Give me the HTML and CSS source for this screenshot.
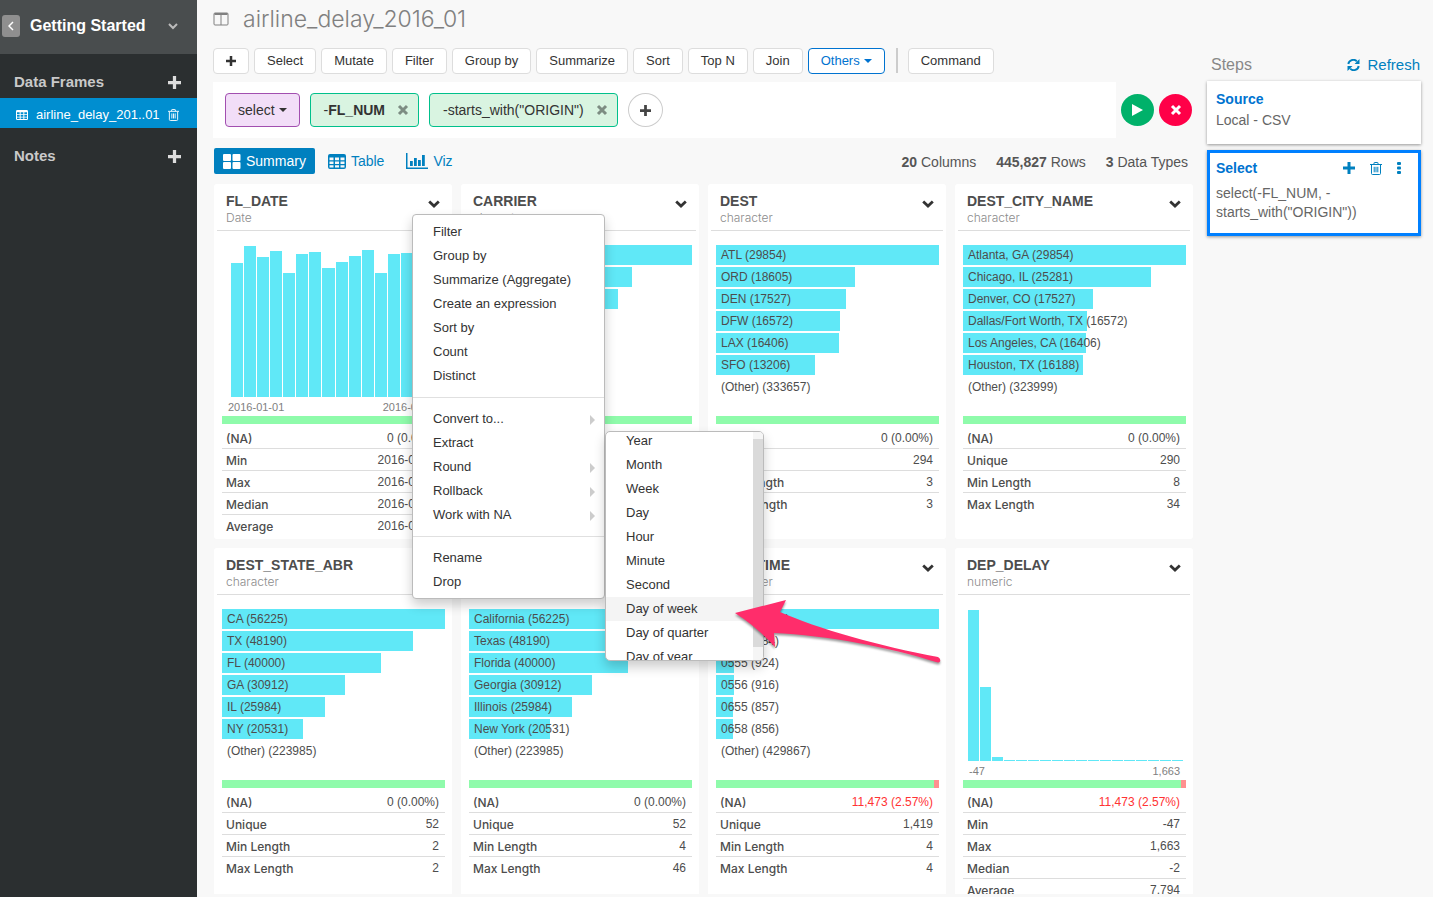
FILE: index.html
```html
<!DOCTYPE html>
<html lang="en">
<head>
<meta charset="utf-8">
<title>airline_delay_2016_01</title>
<link rel="stylesheet" href="styles.css">
</head>
<body>
<svg class="defs" aria-hidden="true">
  <symbol id="plus" viewBox="0 0 12 12"><path d="M4.5 0h3v4.5H12v3H7.500V12h-3V7.500H0v-3h4.500z"/></symbol>
  <symbol id="times" viewBox="0 0 12 12"><path d="M2 2l8 8M10 2l-8 8" fill="none" stroke="currentColor" stroke-width="3"/></symbol>
  <symbol id="trash" viewBox="0 0 12 13"><path d="M0 2.500h12M4 2.500V1q0-.5.5-.5h3q.5 0 .5.5v1.500M1.500 3v8.500q0 1 1 1h7q1 0 1-1V3M4.200 4.800v5.500M6 4.800v5.500M7.800 4.800v5.500" fill="none" stroke="currentColor"/></symbol>
  <symbol id="table" viewBox="0 0 18 15"><path fill-rule="evenodd" d="M2 0h14q2 0 2 2v11q0 2-2 2H2q-2 0-2-2V2q0-2 2-2zM1.500 3.500v2.700h4V3.500zM7 3.500v2.700h4V3.500zM12.500 3.500v2.700h4V3.500zM1.500 7.500v2.500h4V7.500zM7 7.500v2.500h4V7.500zM12.500 7.500v2.500h4V7.500zM1.500 11.300v2.200h4v-2.200zM7 11.300v2.200h4v-2.200zM12.500 11.300v2.200h4v-2.200z"/></symbol>
  <symbol id="chevron" viewBox="0 0 12 8"><path d="M1.200 1.500L6 6l4.800-4.500" fill="none" stroke="currentColor" stroke-width="2.800"/></symbol>
</svg>
<div class="app">
  <nav class="sidebar">
    <div class="project">
      <button class="back" aria-label="Back"><svg width="6" height="10" viewBox="0 0 6 10"><path d="M5 1L1 5l4 4" fill="none" stroke="currentColor" stroke-width="1.500"/></svg></button>
      <span class="project-name">Getting Started</span>
      <button class="project-toggle" aria-label="Switch project"><svg width="10" height="7" viewBox="0 0 10 7"><path d="M1 1l4 4 4-4" fill="none" stroke="currentColor" stroke-width="2"/></svg></button>
    </div>
    <div class="section"><h2>Data Frames</h2><button aria-label="Add data frame"><svg width="13" height="13"><use href="#plus"/></svg></button></div>
    <div class="frame">
      <a href="#"><svg width="12" height="10"><use href="#table"/></svg>airline_delay_201..01</a>
      <button aria-label="Delete data frame"><svg width="11" height="12"><use href="#trash"/></svg></button>
    </div>
    <div class="section"><h2>Notes</h2><button aria-label="Add note"><svg width="13" height="13"><use href="#plus"/></svg></button></div>
  </nav>

  <main class="main">
    <header class="title">
      <svg width="16" height="14" viewBox="0 0 15 14"><path d="M1.500 1h12q1 0 1 1v10q0 1-1 1h-12q-1 0-1-1V2q0-1 1-1zM7.500 1v12" fill="none" stroke="currentColor"/><path d="M1 1h13v2H1z"/></svg>
      <h1>airline_delay_2016_01</h1>
    </header>
    <div class="columns">
      <section class="work">
        <div class="toolbar">
          <button class="btn" aria-label="Add"><svg width="10" height="10"><use href="#plus"/></svg></button>
          <button class="btn">Select</button>
          <button class="btn">Mutate</button>
          <button class="btn">Filter</button>
          <button class="btn">Group by</button>
          <button class="btn">Summarize</button>
          <button class="btn">Sort</button>
          <button class="btn">Top N</button>
          <button class="btn">Join</button>
          <button class="btn btn-active">Others<span class="caret"></span></button>
          <span class="separator"></span>
          <button class="btn">Command</button>
        </div>
        <div class="command">
          <div class="tokens">
            <button class="token verb">select<span class="caret"></span></button>
            <div class="token"><span>-<b>FL_NUM</b></span><button aria-label="Remove FL_NUM"><svg width="12" height="12"><use href="#times"/></svg></button></div>
            <div class="token"><span>-starts_with("ORIGIN")</span><button aria-label="Remove ORIGIN"><svg width="12" height="12"><use href="#times"/></svg></button></div>
            <button class="add-token" aria-label="Add argument"><svg width="11" height="11"><use href="#plus"/></svg></button>
          </div>
          <button class="round run" aria-label="Run"><svg width="11" height="12" viewBox="0 0 11 12"><path d="M0 0l11 6-11 6z"/></svg></button>
          <button class="round cancel" aria-label="Cancel"><svg width="12" height="12"><use href="#times"/></svg></button>
        </div>
        <div class="views">
          <a class="view current" href="#"><svg width="18" height="15" viewBox="0 0 18 15"><rect width="8" height="7" rx="1"/><rect x="9.500" width="8" height="7" rx="1"/><rect y="8" width="8" height="7" rx="1"/><rect x="9.500" y="8" width="8" height="7" rx="1"/></svg>Summary</a>
          <a class="view" href="#"><svg width="18" height="15"><use href="#table"/></svg>Table</a>
          <a class="view" href="#"><svg width="22" height="16" viewBox="0 0 22 16"><path d="M0 0h1.500v14.500H22V16H0zM4 8h2.800v5H4zM8 5h2.800v8H8zM12 7h2.800v6H12zM16 2h2.800v11H16z"/></svg>Viz</a>
          <p class="counts"><span><b>20</b> Columns</span><span><b>445,827</b> Rows</span><span><b>3</b> Data Types</span></p>
        </div>

        <div class="cards">
          <article class="card">
            <header><div><h3>FL_DATE</h3><p>Date</p></div><button aria-label="FL_DATE menu"><svg width="12" height="8"><use href="#chevron"/></svg></button></header>
            <div class="chart">
              <div class="histogram dates">
                <i style="height:134px"></i><i style="height:151px"></i><i style="height:140px"></i><i style="height:146px"></i><i style="height:124px"></i><i style="height:143px"></i><i style="height:145px"></i><i style="height:129px"></i><i style="height:135px"></i><i style="height:141px"></i><i style="height:147px"></i><i style="height:124px"></i><i style="height:143px"></i><i style="height:144px"></i><i style="height:138px"></i><i style="height:130px"></i>
              </div>
              <div class="axis"><span>2016-01-01</span><span>2016-01-31</span></div>
            </div>
            <div class="quality"></div>
            <table>
              <tr><th>(NA)</th><td>0 (0.00%)</td></tr>
              <tr><th>Min</th><td>2016-01-01</td></tr>
              <tr><th>Max</th><td>2016-01-31</td></tr>
              <tr><th>Median</th><td>2016-01-15</td></tr>
              <tr><th>Average</th><td>2016-01-15</td></tr>
            </table>
            <div class="popup">
              <ul class="menu">
                <li>Filter</li><li>Group by</li><li>Summarize (Aggregate)</li><li>Create an expression</li><li>Sort by</li><li>Count</li><li>Distinct</li>
                <li class="divider"></li>
                <li class="more">Convert to...</li><li>Extract</li><li class="more">Round</li><li class="more">Rollback</li><li class="more">Work with NA</li>
                <li class="divider"></li>
                <li>Rename</li><li>Drop</li>
              </ul>
              <div class="submenu">
                <ul>
                  <li>Year</li><li>Month</li><li>Week</li><li>Day</li><li>Hour</li><li>Minute</li><li>Second</li><li class="hover">Day of week</li><li>Day of quarter</li><li>Day of year</li>
                </ul>
                <div class="scrollbar"><span></span></div>
              </div>
              <svg class="pointer" width="212" height="70" viewBox="0 0 212 70"><path d="M3 17L54 4 48 16C84 32 150 51 206 61Q209 63 208 65.500Q207 67 204 66C160 52 94 39 42 37L43 51Q25 31 3 17z"/></svg>
            </div>
          </article>

          <article class="card">
            <header><div><h3>CARRIER</h3><p>character</p></div><button aria-label="CARRIER menu"><svg width="12" height="8"><use href="#chevron"/></svg></button></header>
            <ul class="chart">
              <li><span style="width:100%">WN (104169)</span></li>
              <li><span style="width:73%">DL (76017)</span></li>
              <li><span style="width:67%">AA (69793)</span></li>
              <li><span style="width:48%">OO (50001)</span></li>
              <li><span style="width:37%">UA (38541)</span></li>
              <li><span style="width:37%">EV (38541)</span></li>
              <li>(Other) (68765)</li>
            </ul>
            <div class="quality"></div>
            <table>
              <tr><th>(NA)</th><td>0 (0.00%)</td></tr>
              <tr><th>Unique</th><td>12</td></tr>
              <tr><th>Min Length</th><td>2</td></tr>
              <tr><th>Max Length</th><td>2</td></tr>
            </table>
          </article>

          <article class="card">
            <header><div><h3>DEST</h3><p>character</p></div><button aria-label="DEST menu"><svg width="12" height="8"><use href="#chevron"/></svg></button></header>
            <ul class="chart">
              <li><span style="width:100%">ATL (29854)</span></li>
              <li><span style="width:62.500%">ORD (18605)</span></li>
              <li><span style="width:58.500%">DEN (17527)</span></li>
              <li><span style="width:55.400%">DFW (16572)</span></li>
              <li><span style="width:55%">LAX (16406)</span></li>
              <li><span style="width:44.200%">SFO (13206)</span></li>
              <li>(Other) (333657)</li>
            </ul>
            <div class="quality"></div>
            <table>
              <tr><th>(NA)</th><td>0 (0.00%)</td></tr>
              <tr><th>Unique</th><td>294</td></tr>
              <tr><th>Min Length</th><td>3</td></tr>
              <tr><th>Max Length</th><td>3</td></tr>
            </table>
          </article>

          <article class="card">
            <header><div><h3>DEST_CITY_NAME</h3><p>character</p></div><button aria-label="DEST_CITY_NAME menu"><svg width="12" height="8"><use href="#chevron"/></svg></button></header>
            <ul class="chart">
              <li><span style="width:100%">Atlanta, GA (29854)</span></li>
              <li><span style="width:84.500%">Chicago, IL (25281)</span></li>
              <li><span style="width:58.500%">Denver, CO (17527)</span></li>
              <li><span style="width:55.400%">Dallas/Fort Worth, TX (16572)</span></li>
              <li><span style="width:55%">Los Angeles, CA (16406)</span></li>
              <li><span style="width:54%">Houston, TX (16188)</span></li>
              <li>(Other) (323999)</li>
            </ul>
            <div class="quality"></div>
            <table>
              <tr><th>(NA)</th><td>0 (0.00%)</td></tr>
              <tr><th>Unique</th><td>290</td></tr>
              <tr><th>Min Length</th><td>8</td></tr>
              <tr><th>Max Length</th><td>34</td></tr>
            </table>
          </article>

          <article class="card">
            <header><div><h3>DEST_STATE_ABR</h3><p>character</p></div><button aria-label="DEST_STATE_ABR menu"><svg width="12" height="8"><use href="#chevron"/></svg></button></header>
            <ul class="chart">
              <li><span style="width:100%">CA (56225)</span></li>
              <li><span style="width:85.700%">TX (48190)</span></li>
              <li><span style="width:71.200%">FL (40000)</span></li>
              <li><span style="width:55%">GA (30912)</span></li>
              <li><span style="width:46.300%">IL (25984)</span></li>
              <li><span style="width:36.500%">NY (20531)</span></li>
              <li>(Other) (223985)</li>
            </ul>
            <div class="quality"></div>
            <table>
              <tr><th>(NA)</th><td>0 (0.00%)</td></tr>
              <tr><th>Unique</th><td>52</td></tr>
              <tr><th>Min Length</th><td>2</td></tr>
              <tr><th>Max Length</th><td>2</td></tr>
            </table>
          </article>

          <article class="card">
            <header><div><h3>DEST_STATE_NM</h3><p>character</p></div><button aria-label="DEST_STATE_NM menu"><svg width="12" height="8"><use href="#chevron"/></svg></button></header>
            <ul class="chart">
              <li><span style="width:100%">California (56225)</span></li>
              <li><span style="width:85.700%">Texas (48190)</span></li>
              <li><span style="width:71.200%">Florida (40000)</span></li>
              <li><span style="width:55%">Georgia (30912)</span></li>
              <li><span style="width:46.300%">Illinois (25984)</span></li>
              <li><span style="width:36.500%">New York (20531)</span></li>
              <li>(Other) (223985)</li>
            </ul>
            <div class="quality"></div>
            <table>
              <tr><th>(NA)</th><td>0 (0.00%)</td></tr>
              <tr><th>Unique</th><td>52</td></tr>
              <tr><th>Min Length</th><td>4</td></tr>
              <tr><th>Max Length</th><td>46</td></tr>
            </table>
          </article>

          <article class="card">
            <header><div><h3>DEP_TIME</h3><p>character</p></div><button aria-label="DEP_TIME menu"><svg width="12" height="8"><use href="#chevron"/></svg></button></header>
            <ul class="chart">
              <li><span style="width:100%">(NA) (11473)</span></li>
              <li><span style="width:8.500%">0600 (984)</span></li>
              <li><span style="width:8.100%">0555 (924)</span></li>
              <li><span style="width:8%">0556 (916)</span></li>
              <li><span style="width:7.500%">0655 (857)</span></li>
              <li><span style="width:7.500%">0658 (856)</span></li>
              <li>(Other) (429867)</li>
            </ul>
            <div class="quality missing"></div>
            <table>
              <tr><th>(NA)</th><td class="bad">11,473 (2.57%)</td></tr>
              <tr><th>Unique</th><td>1,419</td></tr>
              <tr><th>Min Length</th><td>4</td></tr>
              <tr><th>Max Length</th><td>4</td></tr>
            </table>
          </article>

          <article class="card">
            <header><div><h3>DEP_DELAY</h3><p>numeric</p></div><button aria-label="DEP_DELAY menu"><svg width="12" height="8"><use href="#chevron"/></svg></button></header>
            <div class="chart">
              <div class="histogram">
                <i style="height:151px"></i><i style="height:74px"></i><i style="height:4px"></i><i></i><i></i><i></i><i></i><i></i><i></i><i></i><i></i><i></i><i></i><i></i><i></i><i></i><i></i><i></i>
              </div>
              <div class="axis"><span>-47</span><span>1,663</span></div>
            </div>
            <div class="quality missing"></div>
            <table>
              <tr><th>(NA)</th><td class="bad">11,473 (2.57%)</td></tr>
              <tr><th>Min</th><td>-47</td></tr>
              <tr><th>Max</th><td>1,663</td></tr>
              <tr><th>Median</th><td>-2</td></tr>
              <tr><th>Average</th><td>7.794</td></tr>
            </table>
          </article>
        </div>
      </section>

      <aside class="steps">
        <div class="steps-head"><h2>Steps</h2><a href="#"><svg width="13" height="12" viewBox="0 0 13 12"><path d="M1.300 5A5 5 0 0 1 9.800 2.300M11.700 7A5 5 0 0 1 3.200 9.700" fill="none" stroke="currentColor" stroke-width="1.900"/><path d="M12.500 0v5h-5zM.5 12V7h5z"/></svg>Refresh</a></div>
        <div class="step"><h3>Source</h3><p>Local - CSV</p></div>
        <div class="step selected">
          <div class="step-title"><h3>Select</h3>
            <button aria-label="Add step"><svg width="12" height="12"><use href="#plus"/></svg></button>
            <button aria-label="Delete step"><svg width="12" height="13"><use href="#trash"/></svg></button>
            <button aria-label="More"><svg width="4" height="12" viewBox="0 0 4 12"><rect width="4" height="3" rx="1"/><rect y="4.500" width="4" height="3" rx="1"/><rect y="9" width="4" height="3" rx="1"/></svg></button>
          </div>
          <p>select(-FL_NUM, -<br>starts_with("ORIGIN"))</p>
        </div>
      </aside>
    </div>
  </main>
</div>
</body>
</html>
```
FILE: styles.css
```css
* { box-sizing: border-box; }
body { margin: 0; background: #f8f8f8; color: #4d4d4d; font: 14px/20px "Liberation Sans", Arial, sans-serif; }
h1, h2, h3, p, ul { margin: 0; padding: 0; }
ul { list-style: none; }
a { text-decoration: none; color: #0080bf; }
button { margin: 0; padding: 0; border: 0; background: none; color: inherit; font: inherit; }
svg { display: block; flex: none; fill: currentColor; }
.defs { position: absolute; width: 0; height: 0; }

.app { display: flex; height: 100vh; overflow: hidden; }

/* Sidebar */
.sidebar { flex: none; width: 197px; background: #2b2f30; color: #c9c9c9; }
.project { display: flex; align-items: center; height: 54px; padding: 0 19px 2px 2px; background: #494d4e; color: #fff; }
.back { display: grid; place-items: center; width: 18px; height: 22px; border-radius: 3px; background: #8f8f8f; }
.project-name { flex: 1; margin-left: 10px; font-size: 16px; font-weight: bold; }
.project-toggle { color: #bbb; }
.section { display: flex; align-items: center; justify-content: space-between; height: 32px; margin-top: 12px; padding: 0 16px 0 14px; }
.section h2 { font-size: 15px; }
.section button { color: #ddd; }
.frame { display: flex; align-items: center; justify-content: space-between; height: 30px; padding: 3px 18px 0 16px; background: #008ed0; color: #fff; font-size: 13px; }
.frame a { display: flex; align-items: center; gap: 8px; color: #fff; }

/* Page title */
.main { display: flex; flex-direction: column; flex: 1; min-width: 0; padding: 0 12px 3px 16px; }
.title { display: flex; align-items: center; gap: 14px; height: 48px; padding-bottom: 11px; color: #808080; }
.title h1 { font: 300 23px/28px Inter, "Liberation Sans", sans-serif; }
.columns { display: grid; grid-template-columns: minmax(0, 1fr) 214px; gap: 14px; flex: 1; min-height: 0; }
.work { display: flex; flex-direction: column; min-width: 0; min-height: 0; }

/* Toolbar */
.toolbar { display: flex; gap: 5px; }
.btn { display: flex; align-items: center; height: 26px; padding: 0 12px; border: 1px solid #ddd; border-radius: 4px; background: #fff; color: #333; font-size: 13px; }
.btn-active { border-color: #0073d0; color: #0073d0; }
.caret { width: 8px; margin-left: 4px; border: 4px solid transparent; border-top-color: currentColor; border-bottom: 0; }
.separator { width: 2px; height: 25px; margin: 0 5px 0 6px; background: #ccc; }

/* Command bar */
.command { display: flex; align-items: center; gap: 5px; margin-top: 8px; padding-right: 1px; }
.tokens { display: flex; align-items: center; gap: 10px; flex: 1; height: 56px; padding: 0 12px; background: #fff; }
.token { display: flex; align-items: center; gap: 12px; height: 34px; padding: 0 9px 0 13px; border: 1px solid #00c08b; border-radius: 4px; background: #d9f4e1; color: #333; }
.token button { color: #7d8c82; }
.verb { gap: 0; padding: 0 12px; border-color: #a24fb0; background: #f2def8; }
.add-token { display: grid; place-items: center; width: 35px; height: 34px; border: 1px solid #ccc; border-radius: 50%; color: #444; }
.round { display: grid; place-items: center; width: 33px; height: 32px; border-radius: 50%; color: #fff; }
.run { background: #00b16a; }
.cancel { background: #ff0048; }

/* View switch */
.views { display: flex; align-items: center; gap: 13px; height: 26px; margin: 10px 0 10px 1px; }
.view { display: flex; align-items: center; gap: 5px; height: 26px; padding-right: 9px; }
.current { padding: 0 9px; border-radius: 2px; background: #0080bf; color: #fff; }
.counts { display: flex; gap: 20px; margin-left: auto; padding: 2px 5px 0 0; color: #555; }

/* Column cards */
.cards { display: grid; grid-template-columns: repeat(4, minmax(0, 1fr)); grid-auto-rows: 355px; gap: 9px; flex: 1; min-height: 0; margin-left: 1px; overflow: hidden; }
.card { position: relative; border-radius: 3px; background: #fff; }
.card header { display: flex; align-items: center; justify-content: space-between; height: 47px; margin: 0 3px; padding: 0 9px; border-bottom: 1px solid #ddd; }
.card header div { padding-top: 4px; }
.card header button { color: #333; margin-bottom: 6px; }
.card h3 { font-size: 14px; line-height: 17px; }
.card header p { color: #8c8c8c; font: 300 12px/16px Inter, "Liberation Sans", sans-serif; }
.chart { height: 171px; margin: 14px 7px 0 8px; font-size: 12px; }
.chart li { height: 20px; margin-bottom: 2px; white-space: nowrap; }
.chart li span { display: block; height: 20px; background: #60e8f7; }
.chart li:last-child, .chart li span { padding-left: 5px; }
.histogram { display: flex; align-items: flex-end; gap: 1px; height: 152px; padding: 0 3px 0 5px; }
.histogram i { flex: 1; height: 1px; background: #60e8f7; }
.dates { padding: 0 6px 0 9px; }
.axis { display: flex; justify-content: space-between; padding: 0 6px; color: #808080; font-size: 11px; }
.quality { height: 8px; margin: 0 7px 0 8px; background: #8ffbab; }
.missing { border-right: 5px solid #ff9090; }
.card table { width: calc(100% - 15px); margin: 3px 7px 0 8px; border-spacing: 0; font-size: 12px; line-height: 19px; }
.card th, .card td { padding: 2px 0 0; border-bottom: 1px solid #ddd; }
.card th { padding-left: 4px; text-align: left; font-family: Inter, "Liberation Sans", sans-serif; font-weight: 500; }
.card td { padding-right: 6px; text-align: right; }
.card tr:last-child > * { border-bottom: 0; }
.card .bad { color: #f33; }

/* Column menu */
.popup { position: absolute; z-index: 2; top: 30px; left: calc(100% - 40px); color: #333; font-size: 13px; line-height: 24px; }
.menu { width: 193px; padding: 5px 0 4px; border: 1px solid #bbb; border-radius: 4px; background: #fff; box-shadow: 0 6px 12px rgba(0, 0, 0, .2); }
.menu li { display: flex; align-items: center; justify-content: space-between; height: 24px; padding: 0 9px 0 20px; }
.menu .divider { height: 1px; margin: 9px 0; padding: 0; background: #e0e0e0; }
.more::after { content: ""; margin-top: 2px; border: 5px solid transparent; border-left-color: #ccc; border-right: 0; }
.submenu { position: absolute; top: 217px; left: 100%; display: flex; width: 159px; height: 230px; overflow: hidden; border: 1px solid #bbb; border-radius: 5px; background: #fff; box-shadow: 0 6px 12px rgba(0, 0, 0, .2); }
.submenu ul { flex: 1; margin-top: -3px; }
.submenu li { height: 24px; padding-left: 20px; }
.submenu .hover { background: #f4f4f4; }
.scrollbar { width: 10px; padding-top: 7px; background: #f5f5f5; }
.scrollbar span { display: block; height: 208px; background: #dadada; }
.pointer { position: absolute; top: 382px; left: 320px; fill: #ff2d6b; filter: drop-shadow(0 2px 1px rgba(0, 0, 0, .4)); }

/* Steps */
.steps { padding-top: 7px; }
.steps-head { display: flex; align-items: center; justify-content: space-between; padding: 0 1px 0 4px; margin-bottom: 6px; }
.steps-head h2 { color: #888; font-size: 16px; font-weight: normal; }
.steps-head a { display: flex; align-items: center; gap: 7px; font-size: 15px; }
.step { min-height: 63px; margin-bottom: 6px; padding: 8px 9px; background: #fff; box-shadow: 0 1px 3px rgba(0, 0, 0, .4); color: #666; }
.step h3 { color: #0073d0; font-size: 14px; }
.step p { line-height: 23px; }
.selected { min-height: 86px; padding: 5px 17px 5px 6px; border: 3px solid #0080ff; }
.step-title { display: flex; align-items: center; gap: 15px; margin-bottom: 6px; color: #0080bf; }
.step-title h3 { flex: 1; }
.selected p { line-height: 19px; white-space: nowrap; }
```
